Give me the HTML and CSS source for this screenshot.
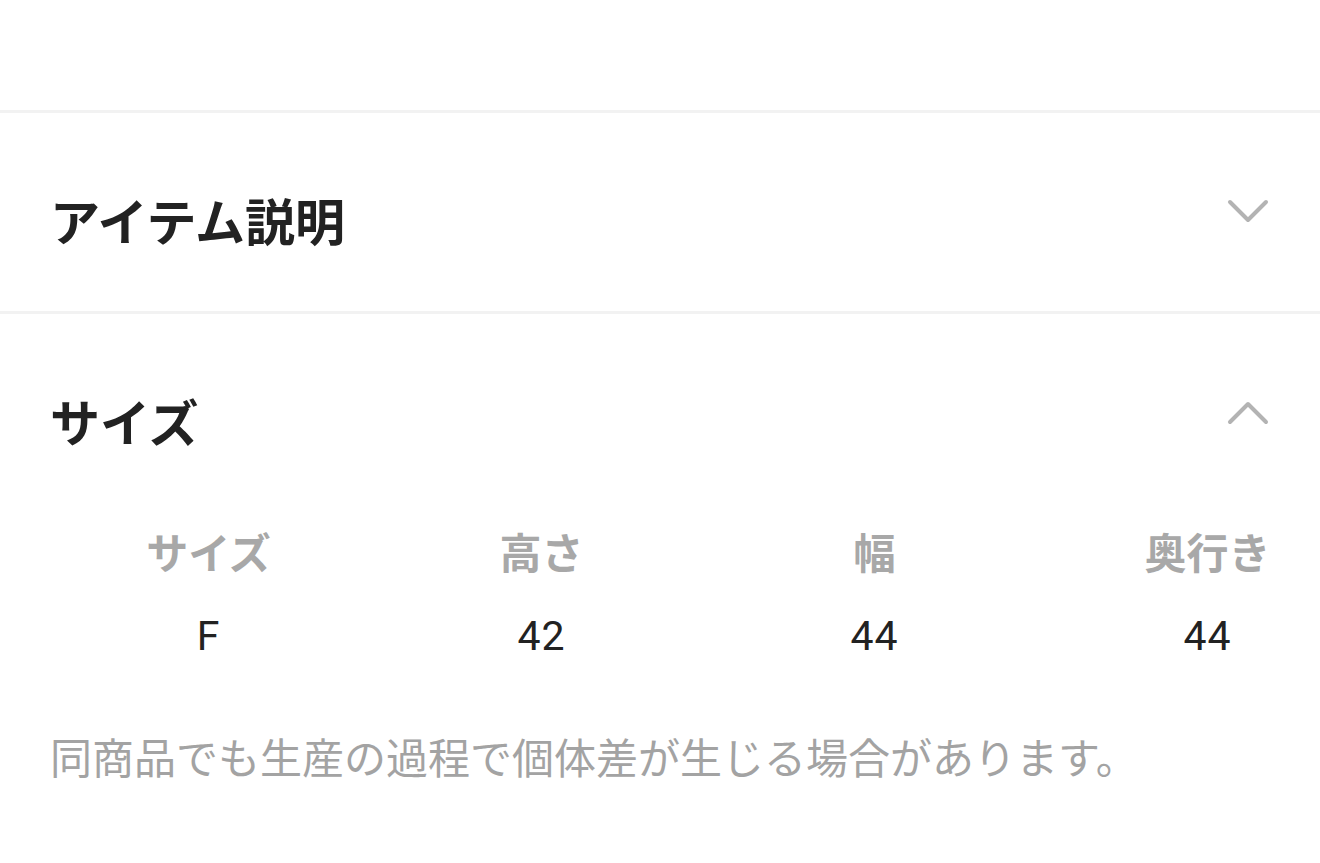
FILE: index.html
```html
<!DOCTYPE html>
<html lang="ja">
<head>
<meta charset="utf-8">
<title>アイテム詳細</title>
<link rel="stylesheet" href="styles.css">
</head>
<body>
<div class="page">
  <div class="top-space"></div>
  <section class="acc">
    <div class="acc-head">
      <h2 class="acc-title">アイテム説明</h2>
      <svg class="chev" viewBox="0 0 44 26" width="44" height="26"><path d="M4 4 L22 22 L40 4" /></svg>
    </div>
  </section>
  <section class="acc open">
    <div class="acc-head">
      <h2 class="acc-title">サイズ</h2>
      <svg class="chev" viewBox="0 0 44 26" width="44" height="26"><path d="M4 22 L22 4 L40 22" /></svg>
    </div>
    <div class="size-table">
      <div class="th">サイズ</div>
      <div class="th">高さ</div>
      <div class="th">幅</div>
      <div class="th">奥行き</div>
      <div class="td">F</div>
      <div class="td">42</div>
      <div class="td">44</div>
      <div class="td">44</div>
    </div>
    <p class="note">同商品でも生産の過程で個体差が生じる場合があります。</p>
  </section>
</div>
</body>
</html>
```

FILE: styles.css
```css
* { box-sizing: border-box; }
html, body {
  margin: 0;
  padding: 0;
  background: #ffffff;
}
body {
  font-family: "Noto Sans CJK JP", "Noto Sans", sans-serif;
  color: #222222;
}
.page {
  width: 1320px;
  overflow: hidden;
}
.top-space {
  height: 110px;
}
.acc {
  border-top: 3px solid #f2f2f2;
  padding: 73px 50px 58px;
}
.acc.open {
  padding-bottom: 60px;
}
.acc-head {
  display: flex;
  justify-content: space-between;
  align-items: flex-start;
}
.acc-title {
  margin: 0;
  font-size: 50px;
  line-height: 67px;
  font-weight: 700;
  color: #222222;
}
.chev {
  margin-top: 12px;
  margin-right: 0;
  fill: none;
  stroke: #b3b3b3;
  stroke-width: 4;
  stroke-linecap: round;
  stroke-linejoin: round;
}
.acc.open .chev {
  margin-top: 13px;
}
.size-table {
  display: grid;
  grid-template-columns: repeat(4, 333px);
  margin: 69px 0 0 -8px;
  row-gap: 29px;
}
.th, .td {
  text-align: center;
  font-size: 42px;
  line-height: 56px;
}
.th {
  font-weight: 700;
  color: #a8a8a8;
}
.td {
  font-family: Roboto, "Noto Sans CJK JP", sans-serif;
  font-size: 41px;
  letter-spacing: 1px;
  font-weight: 400;
  color: #222222;
}
.note {
  margin: 64px 0 0;
  font-size: 42px;
  line-height: 56px;
  color: #a3a3a3;
}
```
